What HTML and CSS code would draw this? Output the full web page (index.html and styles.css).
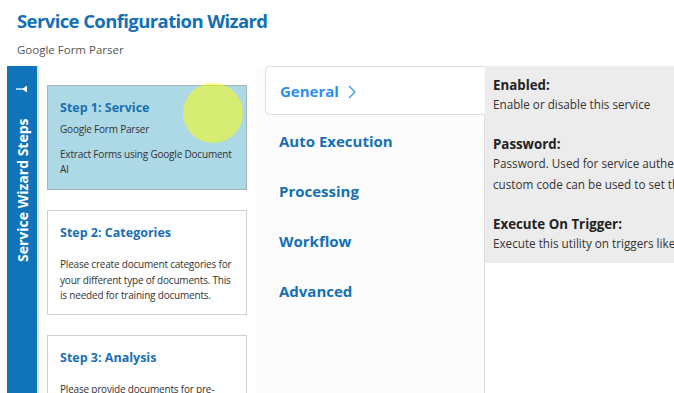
FILE: index.html
```html
<!DOCTYPE html>
<html lang="en">
<head>
  <meta charset="UTF-8" />
  <meta name="viewport" content="width=device-width, initial-scale=1.0"/>
  <title>Service Configuration Wizard</title>
  <link rel="stylesheet" href="styles.css">
</head>
<body>
  <div class="header">
    <h1>Service Configuration Wizard</h1>
    <p class="subtitle">Google Form Parser</p>
  </div>

  <div class="wizard">
    <div class="sidebar">
      <div class="sidebar-label">
        <svg class="pin" width="11" height="6" viewBox="0 0 11 6">
          <rect x="0" y="0" width="1.4" height="6" fill="#fff"/>
          <path d="M1 0.6 L5.5 3 L1 5.4 Z" fill="#fff"/>
          <path d="M5 3 H11" stroke="#fff" stroke-width="1.3"/>
        </svg>
        <span>Service Wizard Steps</span>
      </div>
    </div>

    <div class="steps">
      <div class="step active">
        <h3>Step 1: Service</h3>
        <p class="step-sub">Google Form Parser</p>
        <p>Extract Forms using Google Document AI</p>
        <div class="click-dot"></div>
      </div>
      <div class="step">
        <h3>Step 2: Categories</h3>
        <p>Please create document categories for your different type of documents. This is needed for training documents.</p>
      </div>
      <div class="step">
        <h3>Step 3: Analysis</h3>
        <p>Please provide documents for pre-analysis so the parser can learn the layout of your forms.</p>
      </div>
    </div>

    <div class="nav">
      <div class="nav-item selected">
        General
        <svg class="chev" width="8" height="14" viewBox="0 0 8 14">
          <path d="M1 1 L7 7 L1 13" fill="none" stroke="#2b8ef0" stroke-width="1.2"/>
        </svg>
      </div>
      <div class="nav-item">Auto Execution</div>
      <div class="nav-item">Processing</div>
      <div class="nav-item">Workflow</div>
      <div class="nav-item">Advanced</div>
    </div>

    <div class="details">
      <div class="help">
        <div class="field">
          <h4>Enabled:</h4>
          <p>Enable or disable this service</p>
        </div>
        <div class="field">
          <h4>Password:</h4>
          <p>Password. Used for service authentication. If left empty, custom code can be used to set the password.</p>
        </div>
        <div class="field">
          <h4>Execute On Trigger:</h4>
          <p>Execute this utility on triggers like document upload.</p>
        </div>
      </div>
    </div>
  </div>
</body>
</html>
```

FILE: styles.css
```css
* {
  margin: 0;
  padding: 0;
  box-sizing: border-box;
}

html, body {
  height: 100%;
  overflow: hidden;
  font-family: "Open Sans", sans-serif;
  background-color: #fff;
  color: #333;
}

.header {
  padding: 8px 17px 0;
  height: 66px;
}

h1 {
  font-size: 18.5px;
  font-weight: 700;
  letter-spacing: -0.6px;
  color: #1470b5;
  line-height: 26px;
}

.subtitle {
  margin-top: 8px;
  font-size: 11.5px;
  color: #555;
}

.wizard {
  display: flex;
  height: calc(100% - 66px);
  margin-left: 7px;
}

.sidebar {
  width: 32px;
  flex-shrink: 0;
  background-color: #1074bb;
  border-right: 2px solid #dde3ea;
}

.sidebar-label {
  writing-mode: vertical-rl;
  transform: rotate(180deg);
  display: flex;
  flex-direction: row-reverse;
  align-items: center;
  justify-content: flex-end;
  gap: 26px;
  color: #fff;
  font-size: 14px;
  font-weight: 700;
  width: 30px;
  height: 176px;
  margin-top: 20px;
}

.sidebar-label span {
  white-space: nowrap;
}

.pin {
  display: block;
  flex-shrink: 0;
}

.steps {
  width: 218px;
  flex-shrink: 0;
  padding: 19px 0 0 8px;
  display: flex;
  flex-direction: column;
  gap: 20px;
}

.step {
  position: relative;
  width: 200px;
  height: 105px;
  flex-shrink: 0;
  border: 1px solid #d0d0d0;
  padding: 12px 14px 12px 12px;
  background-color: #fff;
}

.step.active {
  background-color: #add8e6;
  border-color: #a5b4bc;
}

.step h3 {
  font-size: 12.5px;
  font-weight: 700;
  color: #1a6fb3;
  line-height: 20px;
  margin-bottom: 14px;
}

.step p {
  font-size: 10px;
  letter-spacing: -0.2px;
  line-height: 15.5px;
  color: #333;
}

.step .step-sub {
  margin-top: -10px;
  margin-bottom: 9px;
}

.click-dot {
  position: absolute;
  left: 135px;
  top: -3px;
  width: 60px;
  height: 60px;
  border-radius: 50%;
  background-color: rgba(255, 255, 0, 0.5);
}

.nav {
  width: 228px;
  flex-shrink: 0;
  background-color: #fcfcfc;
  border-right: 1px solid #dcdcdc;
  padding: 0 0 0 8px;
}

.nav-item {
  height: 50px;
  display: flex;
  align-items: center;
  padding-left: 14px;
  font-size: 15px;
  font-weight: 700;
  color: #1470b5;
}

.nav-item.selected {
  height: 49px;
  margin-bottom: 1px;
  background-color: #fff;
  color: #2b8ef0;
  border: 1px solid #dddfe3;
  border-right: none;
  border-radius: 5px 0 0 5px;
  margin-right: -1px;
}

.chev {
  margin-left: 9px;
  margin-top: 2px;
}

.details {
  flex: 1;
  overflow: hidden;
}

.help {
  background-color: #ececec;
  height: 197px;
  padding: 10px 0 0 8px;
  white-space: nowrap;
}

.field {
  margin-bottom: 20px;
}

.help h4 {
  font-size: 13.3px;
  font-weight: 700;
  color: #222;
  line-height: 18px;
}

.help p {
  font-size: 11.7px;
  line-height: 21px;
  color: #333;
  white-space: normal;
  width: 330px;
}
```
